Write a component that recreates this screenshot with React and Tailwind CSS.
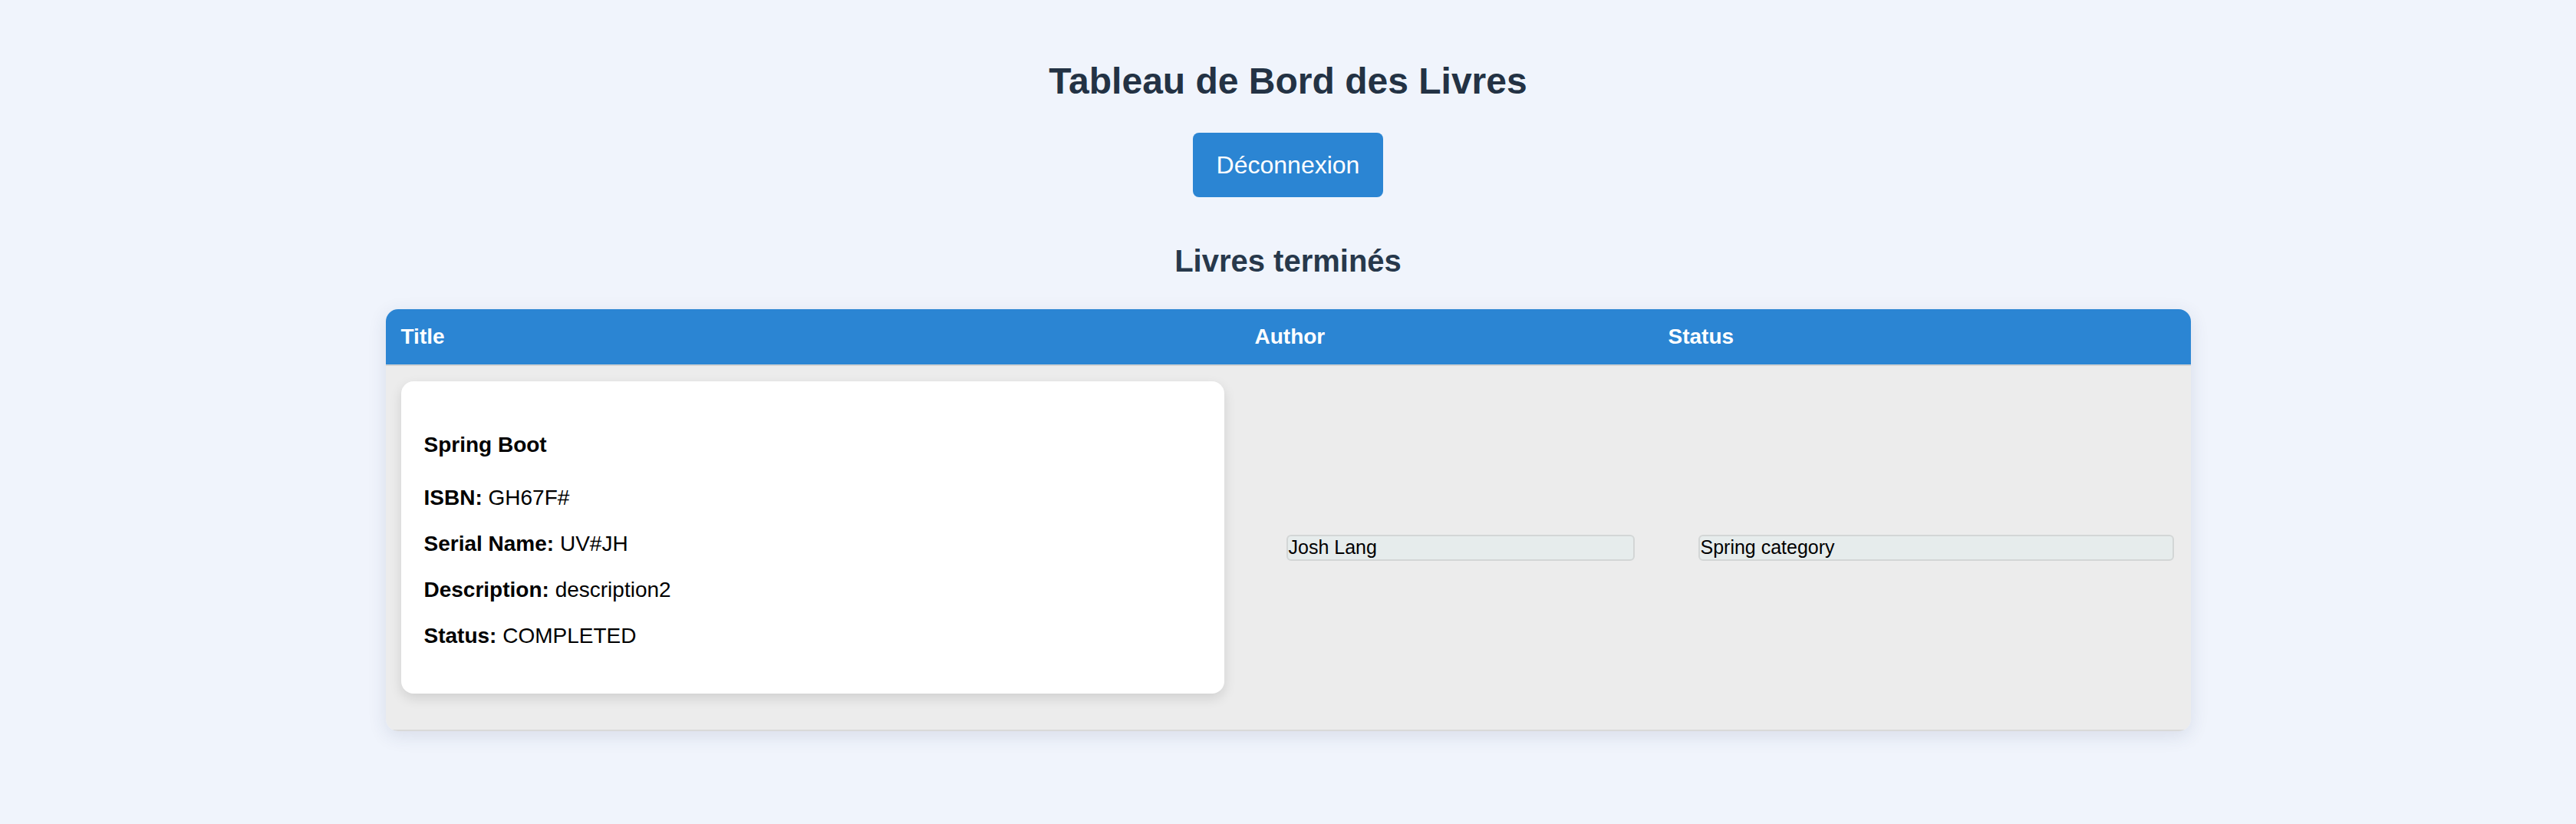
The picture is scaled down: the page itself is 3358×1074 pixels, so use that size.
export default function App() {
  const book = {
    title: "Spring Boot",
    isbn: "GH67F#",
    serialName: "UV#JH",
    description: "description2",
    status: "COMPLETED",
    author: "Josh Lang",
    category: "Spring category",
  };

  const details = [
    ["ISBN:", book.isbn],
    ["Serial Name:", book.serialName],
    ["Description:", book.description],
    ["Status:", book.status],
  ];

  return (
    <div className="min-h-screen bg-[#f0f4fc] font-['Liberation_Sans',Arial,sans-serif] pt-[78px]">
      <div className="flex flex-col items-center">
        <h1 className="text-[48px] leading-[56px] font-bold text-[#233244]">
          Tableau de Bord des Livres
        </h1>
        <button className="mt-[39px] w-[248px] h-[84px] rounded-[8px] bg-[#2b85d3] text-white text-[32px] leading-[37px]">
          Déconnexion
        </button>
        <h2 className="mt-[60px] text-[40px] leading-[46px] font-bold text-[#27384b]">
          Livres terminés
        </h2>
      </div>

      <div className="mt-[40px] mx-auto w-[2353px] rounded-[16px] overflow-hidden shadow-[0_6px_24px_rgba(40,60,100,0.12)]">
        <table className="w-full table-fixed border-collapse">
          <thead>
            <tr className="bg-[#2b85d3] text-white text-left text-[28px] leading-[32px] font-bold">
              <th className="w-[1113px] p-[20px]">Title</th>
              <th className="w-[539px] p-[20px]">Author</th>
              <th className="p-[20px]">Status</th>
            </tr>
          </thead>
          <tbody>
            <tr className="bg-[#ececec] border-t-2 border-b-2 border-t-[#d3d3d3] border-b-[#d9d9d9] align-middle">
              <td className="px-[20px] pt-[20px] pb-[47px]">
                <div className="bg-white rounded-[16px] shadow-[0_6px_16px_rgba(0,0,0,0.12)] px-[30px] pt-[67px] pb-[59px] text-black text-[28px] leading-[32px]">
                  <h4 className="font-bold">{book.title}</h4>
                  <div className="mt-[37px] flex flex-col gap-[28px]">
                    {details.map(([label, value]) => (
                      <p key={label}>
                        <span className="font-bold">{label}</span> {value}
                      </p>
                    ))}
                  </div>
                </div>
              </td>
              <td className="px-[20px]">
                <div className="ml-[41px] w-[454px] h-[34px] flex items-center px-[1px] border-2 border-[#d3d6d6] rounded-[6px] bg-[#e6ecec] text-black text-[25px]">
                  {book.author}
                </div>
              </td>
              <td className="px-[20px]">
                <div className="ml-[39px] w-[620px] h-[34px] flex items-center px-[1px] border-2 border-[#d3d6d6] rounded-[6px] bg-[#e6ecec] text-black text-[25px]">
                  {book.category}
                </div>
              </td>
            </tr>
          </tbody>
        </table>
      </div>
    </div>
  );
}
